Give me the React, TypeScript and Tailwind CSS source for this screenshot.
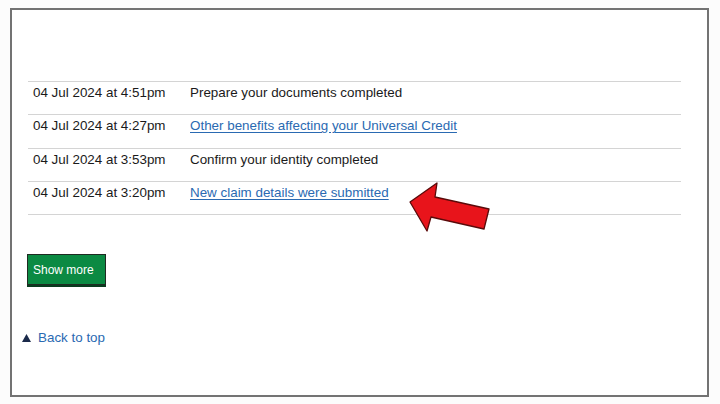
import React from "react";

const rows = [
  { date: "04 Jul 2024 at 4:51pm", text: "Prepare your documents completed", link: false },
  { date: "04 Jul 2024 at 4:27pm", text: "Other benefits affecting your Universal Credit", link: true },
  { date: "04 Jul 2024 at 3:53pm", text: "Confirm your identity completed", link: false },
  { date: "04 Jul 2024 at 3:20pm", text: "New claim details were submitted", link: true },
];

export default function App() {
  return (
    <div
      className="w-[720px] h-[404px] bg-[#fcfcfc] pt-[8px] pl-[10px] overflow-hidden"
      style={{ fontFamily: '"Liberation Sans", Arial, sans-serif' }}
    >
      <div className="relative w-[699px] h-[389px] border-2 border-[#737373] bg-white">
        <div className="pt-[71px] pl-[16px]">
          <div className="w-[653px] border-b border-[#d4d4d4]">
            {rows.map((r) => (
              <div
                key={r.date}
                className="flex items-start h-[33.25px] pt-[3px] border-t border-[#d4d4d4] text-[13.4px] leading-[16px] text-[#1a1a1a]"
              >
                <div className="w-[162px] pl-[5px] shrink-0">{r.date}</div>
                {r.link ? (
                  <span className="text-[#2a6ab2] underline underline-offset-2 decoration-[#2a6ab2]">
                    {r.text}
                  </span>
                ) : (
                  <span>{r.text}</span>
                )}
              </div>
            ))}
          </div>
          <button className="block mt-[39px] -ml-[1px] w-[79px] h-[31px] bg-[#0b8a43] border border-[#1f2a22] shadow-[0_2px_0_#0a3a1e] text-white text-[12px] text-left pl-[5px]">
            Show more
          </button>
          <div className="mt-[43px] -ml-[6px] flex items-center gap-[7px] text-[13.4px] text-[#2a6ab2]">
            <svg width="9" height="8" viewBox="0 0 9 8">
              <polygon points="4.5,0 9,8 0,8" fill="#1b2a4a" />
            </svg>
            <span>Back to top</span>
          </div>
        </div>
        <svg
          className="absolute left-[396px] top-[172px]"
          width="84"
          height="52"
          viewBox="396 172 84 52"
        >
          <polygon
            points="398,192 425,173 423,187 477,199 472,219 419,207 415,221"
            fill="#e8141b"
            stroke="#5a0a0a"
            strokeWidth="1.3"
            strokeLinejoin="round"
          />
        </svg>
      </div>
    </div>
  );
}
